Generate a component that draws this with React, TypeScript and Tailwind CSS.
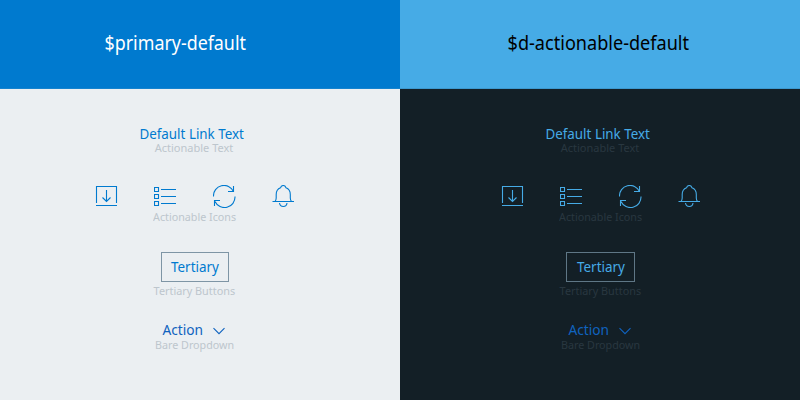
import type { ReactNode } from "react";

type Theme = {
  title: string;
  panel: string;
  header: string;
  titleText: string;
  content: string;
  accent: string;
  caption: string;
  border: string;
  action: string;
};

const themes: Theme[] = [
  {
    title: "$primary-default",
    panel: "bg-[#ebeff2]",
    header: "bg-[#007acf] text-white border-[#1583cf] pr-[50px]",
    titleText: "scale-x-[0.94]",
    content: "pr-[10px]",
    accent: "text-[#007acf]",
    caption: "text-[#bdc6cd]",
    border: "border-[#7e95a5] w-[68px]",
    action: "text-[#1063bf]",
  },
  {
    title: "$d-actionable-default",
    panel: "bg-[#131f26]",
    header: "bg-[#46abe6] text-black border-[#3c98cf] pr-[3px]",
    titleText: "scale-x-[0.952]",
    content: "pl-[2px]",
    accent: "text-[#46abe6]",
    caption: "text-[#293740]",
    border: "border-[#5f7786] w-[69px]",
    action: "text-[#1063bf]",
  },
];

function Icon({ children }: { children: ReactNode }) {
  return (
    <svg width="23" height="23" viewBox="0 0 23 23" fill="none" stroke="currentColor" strokeWidth="1.1">
      {children}
    </svg>
  );
}

function Icons() {
  return (
    <>
      <Icon>
        <path d="M1.5 18V1.5H21.5V18M1 20.5H22M11.5 5V16.5M7.5 12.5L11.5 16.5L15.5 12.5" />
      </Icon>
      <Icon>
        <path d="M.5 2.5H4.5V6.5H.5ZM.5 9.5H4.5V13.5H.5ZM.5 16.5H4.5V20.5H.5ZM7 4.5H22M7 11.5H22M7 18.5H22" />
      </Icon>
      <Icon>
        <path d="M.5 11.5A10.5 10.5 0 0 1 20.5 6.5M20.5 1V6.5H15M22 11.5A10.5 10.5 0 0 1 2 16.5M1.5 21V15.5H7" />
      </Icon>
      <Icon>
        <path d="M.5 16.5H22M3 16.5C3.8 15.5 4.2 14.5 4.2 13V9.5C4.2 6 6 3.7 8.5 2.8C9 1.2 10 .5 11.3 .5S13.5 1.2 14 2.8C16.5 3.7 18.3 6 18.3 9.5V13C18.3 14.5 18.7 15.5 19.5 16.5M7.5 18C7.8 20.2 9.2 21.5 11.3 21.5S14.8 20.2 15 18" />
      </Icon>
    </>
  );
}

function Panel({ theme }: { theme: Theme }) {
  const caption = `text-[11px] leading-[14px] whitespace-nowrap ${theme.caption}`;
  return (
    <section className={`flex h-[400px] w-[400px] flex-col ${theme.panel}`}>
      <header className={`flex h-[89px] items-center justify-center border-b pb-[2px] text-[19px] leading-[26px] whitespace-nowrap ${theme.header}`}>
        <h2 className={theme.titleText}>{theme.title}</h2>
      </header>
      <div className={`flex flex-col items-center ${theme.content}`}>
        <div className="flex flex-col items-center pt-[36px]">
          <a className={`mr-[6px] scale-x-[0.955] text-[14px] leading-[18px] whitespace-nowrap ${theme.accent}`}>Default Link Text</a>
          <span className={`-mt-[2px] mr-[2px] ${caption}`}>Actionable Text</span>
        </div>
        <div className="mt-[30px] flex flex-col items-center">
          <div className={`flex w-[200px] justify-between ${theme.accent}`}>
            <Icons />
          </div>
          <span className={`mt-[2px] scale-x-[0.975] ${caption}`}>Actionable Icons</span>
        </div>
        <div className="mt-[28px] flex flex-col items-center">
          <button className={`h-[30px] border text-[14px] leading-[26px] ${theme.border} ${theme.accent}`}>
            <span className="inline-block scale-x-[0.96]">Tertiary</span>
          </button>
          <span className={`mt-[2px] mr-px scale-x-[0.985] ${caption}`}>Tertiary Buttons</span>
        </div>
        <div className="mt-[23px] flex flex-col items-center">
          <div className={`mr-[3px] flex items-center gap-[9px] text-[14px] leading-[18px] ${theme.action}`}>
            <span className="scale-x-[0.98]">Action</span>
            <svg className="mt-[2px]" width="12" height="8" viewBox="0 0 12 8" fill="none" stroke="currentColor" strokeWidth="1.1">
              <path d="M.5 1.2L6 6.7L11.5 1.2" />
            </svg>
          </div>
          <span className={`-mt-[1px] mr-px scale-x-[0.975] ${caption}`}>Bare Dropdown</span>
        </div>
      </div>
    </section>
  );
}

export default function App() {
  return (
    <main className="flex h-[400px] w-[800px] overflow-hidden font-['Noto_Sans',sans-serif]">
      {themes.map((theme) => (
        <Panel key={theme.title} theme={theme} />
      ))}
    </main>
  );
}
